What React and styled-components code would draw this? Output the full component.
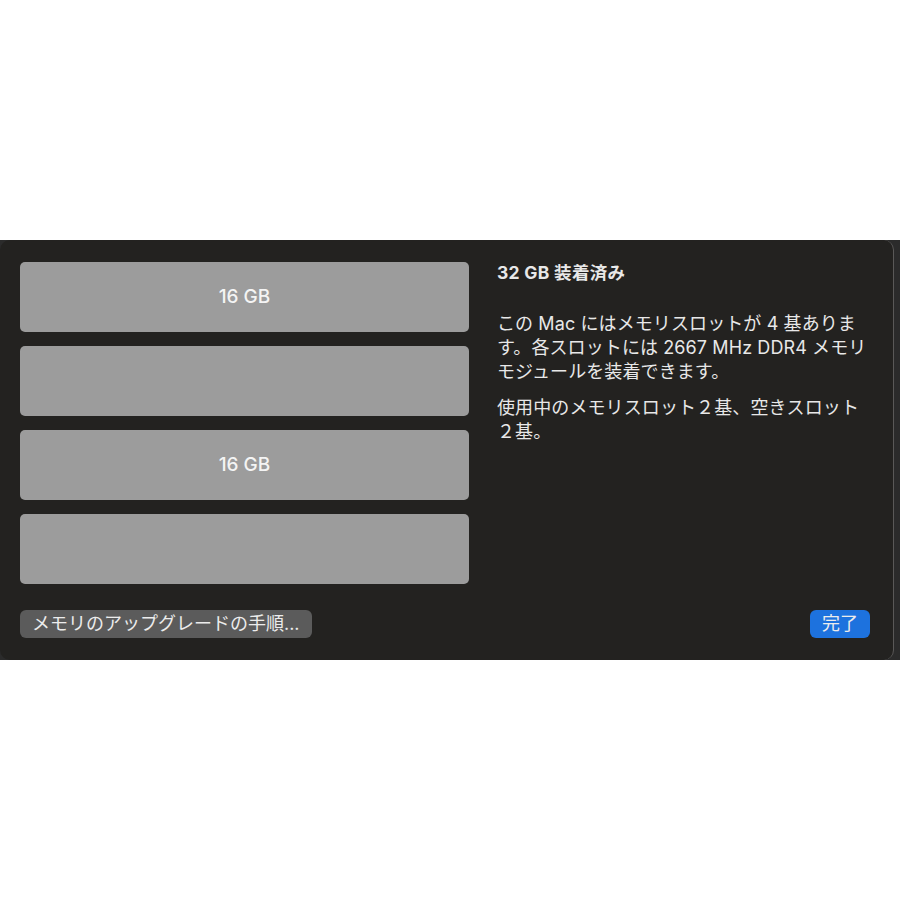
import React from 'react';
import styled, { createGlobalStyle } from 'styled-components';

const GlobalStyle = createGlobalStyle`
  html, body {
    margin: 0;
    padding: 0;
    background: #ffffff;
  }
  body {
    font-family: "Inter", "Noto Sans CJK JP", sans-serif;
  }
`;

const Page = styled.div`
  width: 900px;
  height: 900px;
  padding-top: 240px;
  box-sizing: border-box;
`;

const Backdrop = styled.div`
  height: 420px;
  background: #2b2b2b;
  display: flex;
`;

const Sheet = styled.div`
  width: 894px;
  height: 420px;
  box-sizing: border-box;
  background: #232220;
  border-radius: 10px;
  border-right: 1px solid #5a5958;
  padding: 22px 23px 22px 20px;
  display: flex;
  flex-direction: column;
  justify-content: space-between;
`;

const Body = styled.div`
  display: flex;
  gap: 28px;
`;

const Slots = styled.div`
  width: 449px;
  flex-shrink: 0;
  display: flex;
  flex-direction: column;
  gap: 14px;
`;

const Slot = styled.div`
  height: 70px;
  background: #9c9c9c;
  border-radius: 5px;
  display: flex;
  align-items: center;
  justify-content: center;
  color: #f4f4f4;
  font-size: 19px;
  font-weight: 500;
  padding-bottom: 1px;
  box-sizing: border-box;
`;

const Info = styled.div`
  flex: 1;
  min-width: 0;
  color: #e8e8e8;
  font-size: 18px;
  letter-spacing: 0.1px;
  line-height: 24px;
  margin-top: -1px;
`;

const Heading = styled.div`
  font-size: 17.5px;
  font-weight: 700;
  letter-spacing: 0.3px;
  margin-bottom: 27px;
`;

const Para = styled.p`
  margin: 0 0 12px;
`;

const Line = styled.span`
  display: block;
  white-space: nowrap;
`;

const Footer = styled.div`
  display: flex;
  justify-content: space-between;
  align-items: center;
`;

const Button = styled.button`
  height: 28px;
  padding: 0 12px;
  border: none;
  border-radius: 6px;
  background: ${(p) => (p.$primary ? '#1d72de' : '#5b5b5b')};
  color: #ececec;
  font-family: "Inter", "Noto Sans CJK JP", sans-serif;
  font-size: 18px;
  line-height: 28px;
  cursor: pointer;
`;

const slots = ['16 GB', '', '16 GB', ''];

export default function App() {
  return (
    <>
      <GlobalStyle />
      <Page>
        <Backdrop>
          <Sheet>
            <Body>
              <Slots>
                {slots.map((s, i) => (
                  <Slot key={i}>{s}</Slot>
                ))}
              </Slots>
              <Info>
                <Heading>32 GB 装着済み</Heading>
                <Para>
                  <Line>この Mac にはメモリスロットが 4 基ありま</Line>
                  <Line>す。各スロットには 2667 MHz DDR4 メモリ</Line>
                  <Line>モジュールを装着できます。</Line>
                </Para>
                <Para>
                  <Line>使用中のメモリスロット２基、空きスロット</Line>
                  <Line>２基。</Line>
                </Para>
              </Info>
            </Body>
            <Footer>
              <Button>メモリのアップグレードの手順...</Button>
              <Button $primary>完了</Button>
            </Footer>
          </Sheet>
        </Backdrop>
      </Page>
    </>
  );
}
